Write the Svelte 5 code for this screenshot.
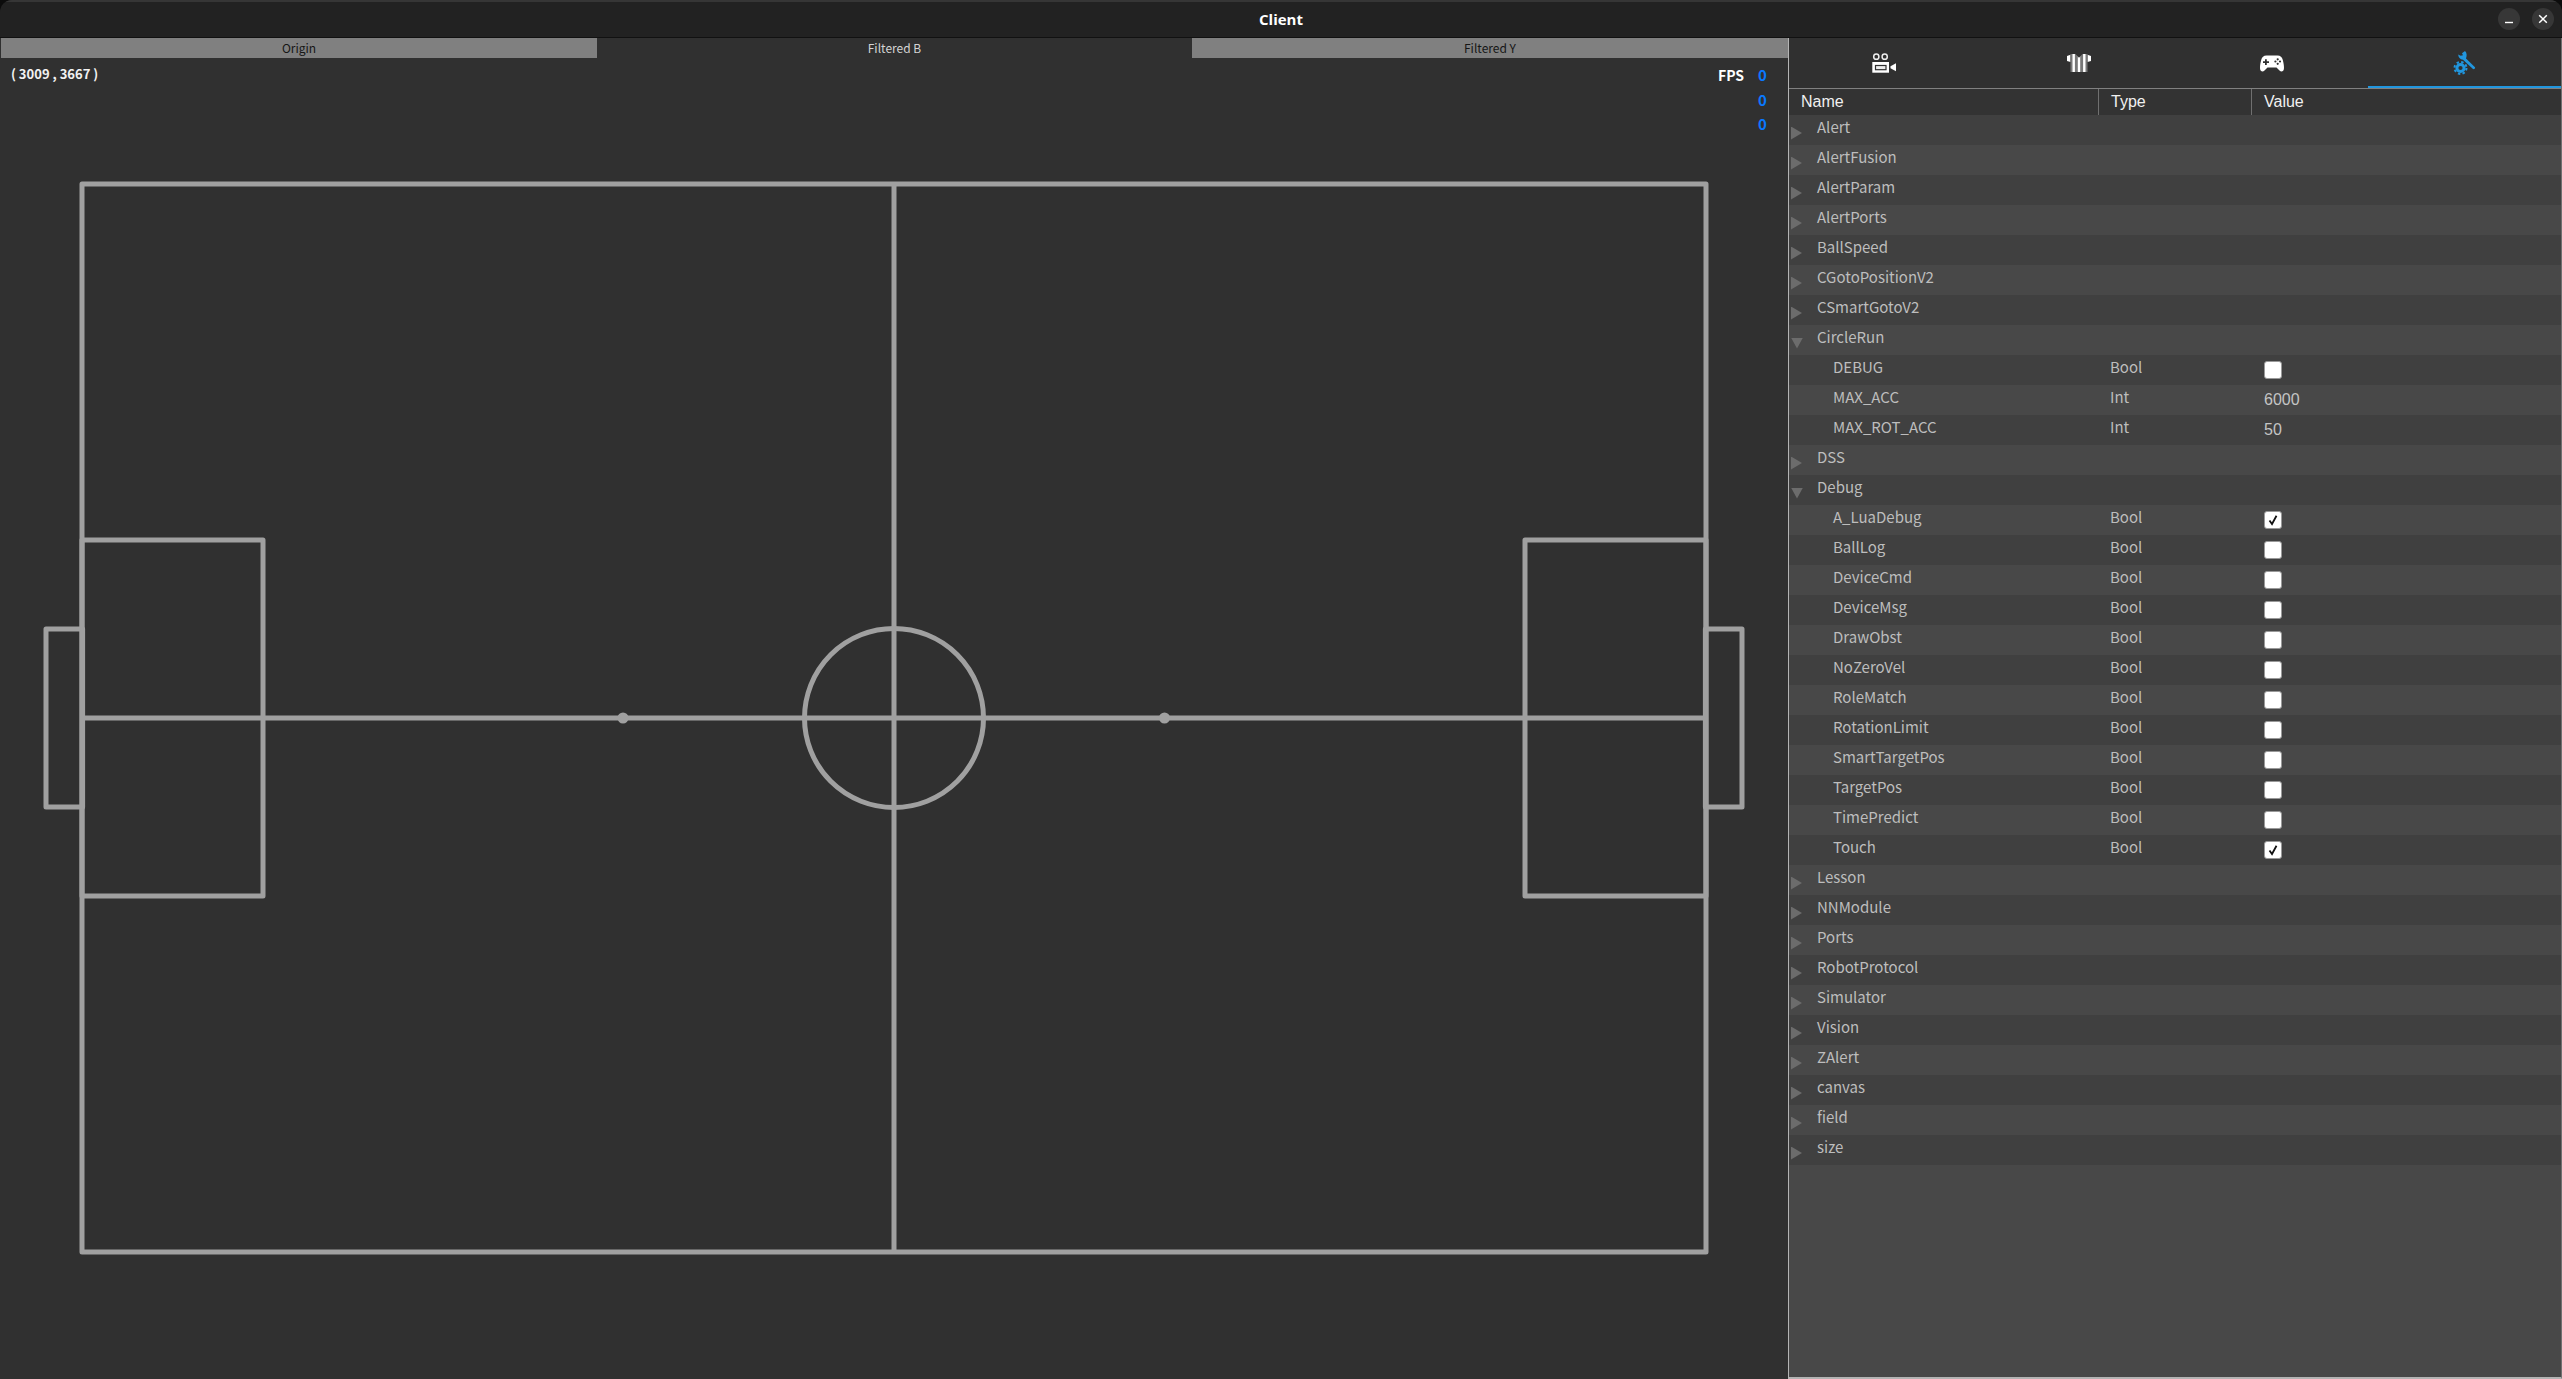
<script>
	const check = (name) => ({ name, type: 'Bool', check: false });
	const on = (name) => ({ name, type: 'Bool', check: true });
	const num = (name, value) => ({ name, type: 'Int', value });

	const groups = [
		{ name: 'Alert' },
		{ name: 'AlertFusion' },
		{ name: 'AlertParam' },
		{ name: 'AlertPorts' },
		{ name: 'BallSpeed' },
		{ name: 'CGotoPositionV2' },
		{ name: 'CSmartGotoV2' },
		{
			name: 'CircleRun',
			items: [check('DEBUG'), num('MAX_ACC', 6000), num('MAX_ROT_ACC', 50)]
		},
		{ name: 'DSS' },
		{
			name: 'Debug',
			items: [
				on('A_LuaDebug'),
				check('BallLog'),
				check('DeviceCmd'),
				check('DeviceMsg'),
				check('DrawObst'),
				check('NoZeroVel'),
				check('RoleMatch'),
				check('RotationLimit'),
				check('SmartTargetPos'),
				check('TargetPos'),
				check('TimePredict'),
				on('Touch')
			]
		},
		{ name: 'Lesson' },
		{ name: 'NNModule' },
		{ name: 'Ports' },
		{ name: 'RobotProtocol' },
		{ name: 'Simulator' },
		{ name: 'Vision' },
		{ name: 'ZAlert' },
		{ name: 'canvas' },
		{ name: 'field' },
		{ name: 'size' }
	];

	const rows = groups.flatMap((g) => [
		{ ...g, group: true, open: !!g.items },
		...(g.items ?? [])
	]);

	const views = [
		{ label: 'Origin', active: false },
		{ label: 'Filtered B', active: true },
		{ label: 'Filtered Y', active: false }
	];

	const fps = [0, 0, 0];
</script>

<div class="window">
	<header class="titlebar">
		<span class="title">Client</span>
		<div class="controls">
			<button class="ctl" aria-label="Minimize">
				<svg width="10" height="10" viewBox="0 0 10 10"><path d="M1 8.5h8" stroke="#fff" stroke-width="1.4" /></svg>
			</button>
			<button class="ctl" aria-label="Close">
				<svg width="10" height="10" viewBox="0 0 10 10"><path d="M1.2 1.2l7.6 7.6M8.8 1.2l-7.6 7.6" stroke="#fff" stroke-width="1.5" /></svg>
			</button>
		</div>
	</header>

	<main class="main">
		<section class="stage">
			<nav class="views">
				{#each views as v (v.label)}
					<span class="view" class:active={v.active}>{v.label}</span>
				{/each}
			</nav>

			<div class="canvas">
				<svg class="field" width="1787" height="1321" viewBox="1 58 1787 1321" aria-hidden="true">
					<g fill="none" stroke="#a0a0a0" stroke-width="5" stroke-linejoin="round">
						<rect x="82" y="184" width="1624" height="1068" />
						<path d="M894 184V1252M82 718H1706" />
						<circle cx="894" cy="718" r="89.500" />
						<rect x="82" y="540" width="181" height="356" />
						<rect x="1525" y="540" width="181" height="356" />
						<rect x="46" y="629" width="36.600" height="178" />
						<rect x="1705.400" y="629" width="36.600" height="178" />
					</g>
					<circle cx="623" cy="718" r="5.500" fill="#a0a0a0" />
					<circle cx="1164.500" cy="718" r="5.500" fill="#a0a0a0" />
				</svg>

				<span class="coord">( 3009 , 3667 )</span>
				<div class="fps">
					{#each fps as f, i}
						<span class="fps-label">{i === 0 ? 'FPS' : ''}</span>
						<span class="fps-val">{f}</span>
					{/each}
				</div>
			</div>
		</section>

		<aside class="panel">
			<div class="tabs">
				<span class="tab">
					<svg class="cam" width="24" height="20" viewBox="0 0 24 20" aria-hidden="true">
						<circle cx="4.300" cy="3.700" r="2.600" fill="none" stroke="#eee" stroke-width="1.500" />
						<circle cx="12.700" cy="3.700" r="2.600" fill="none" stroke="#eee" stroke-width="1.500" />
						<rect x="0.300" y="9" width="16.700" height="10.700" fill="#fff" />
						<rect x="3.500" y="12.500" width="10.500" height="4.200" fill="#eee" stroke="#303030" stroke-width="1.200" />
						<path d="M24 10.300v8l-5.500-3v-2z" fill="#fff" />
					</svg>
				</span>
				<span class="tab">
					<svg width="24" height="18" viewBox="0 0 24 18" aria-hidden="true">
						<path d="M0 2l3.500-1.200V8L0 7z M24 2l-3.500-1.200V8L24 7z" fill="#fff" />
						<rect x="3.500" y="0" width="17" height="18" fill="#777" />
						<path d="M5.500 0h2.400v18h-2.400z M10.800 0h2.400v18h-2.400z M16.100 0h2.400v18h-2.400z" fill="#fff" />
						<path d="M8.500 0h7L12 3.800z" fill="#303030" />
					</svg>
				</span>
				<span class="tab">
					<svg width="24" height="17" viewBox="0 0 24 17" aria-hidden="true">
						<path
							d="M6.500.5H17.500C20.500.5 22 2 22.800 5 23.700 8.500 24.300 12 23.800 14.500 23.400 16.600 21 17.200 19.500 15.500L16.500 12.500H7.500L4.500 15.500C3 17.200.6 16.600.2 14.500-.3 12 .3 8.500 1.200 5 2 2 3.500.5 6.500.5Z"
							fill="#fff"
						/>
						<path d="M5 4.200h1.800v2H9V8H6.800v2H5V8H3V6.200h2z" fill="#303030" />
						<g fill="#303030">
							<circle cx="17.700" cy="4.300" r="1.100" />
							<circle cx="17.700" cy="8.800" r="1.100" />
							<circle cx="15.400" cy="6.500" r="1.100" />
							<circle cx="20" cy="6.500" r="1.100" />
						</g>
					</svg>
				</span>
				<span class="tab active">
					<svg width="24" height="24" viewBox="0 0 24 24" aria-hidden="true">
						<path
							d="M12 0L9 2.200 10 4.300 7.600 4.800 5.200 3.600C5.300 6.500 7 8.600 10 8.800L20 18C21 18.600 22.500 17.400 22 16.200L13 7.500C14 4.500 14 2 12 0Z"
							fill="#2196de"
						/>
						<circle cx="7.500" cy="17" r="3.600" fill="none" stroke="#2196de" stroke-width="3" />
						<circle cx="7.500" cy="17" r="6" fill="none" stroke="#2196de" stroke-width="2" stroke-dasharray="2.400 2.310" />
					</svg>
				</span>
			</div>

			<div class="tree-head">
				<span class="th">Name</span>
				<span class="th">Type</span>
				<span class="th">Value</span>
			</div>

			<div class="tree">
				{#each rows as row, i (row.name)}
					<div class="row" class:odd={i % 2 === 1}>
						{#if row.group}
							<span class="name">
								<span class="arrow" class:open={row.open}></span>
								<span>{row.name}</span>
							</span>
						{:else}
							<span class="name child">{row.name}</span>
							<span class="type">{row.type}</span>
							{#if row.type === 'Bool'}
								<span class="box">
									{#if row.check}
										<svg width="12" height="12" viewBox="0 0 12 12" aria-hidden="true">
											<path d="M2.500 6.500L5 10 9.500 1.800" fill="none" stroke="#111" stroke-width="1.800" />
										</svg>
									{/if}
								</span>
							{:else}
								<span class="value">{row.value}</span>
							{/if}
						{/if}
					</div>
				{/each}
			</div>
		</aside>
	</main>
</div>

<style>
	:global(body) {
		margin: 0;
		background: #0c0c0c;
	}

	.window {
		width: 2562px;
		height: 1379px;
		display: flex;
		flex-direction: column;
		overflow: hidden;
		border-radius: 12px 12px 0 0;
		font-family: 'Noto Sans CJK SC', 'Noto Sans', sans-serif;
	}

	.titlebar {
		height: 38px;
		box-sizing: border-box;
		flex-shrink: 0;
		background: #222;
		border-top: 2px solid #363636;
		border-bottom: 1px solid #111;
		padding-bottom: 2px;
		display: flex;
		align-items: center;
		justify-content: center;
		position: relative;
	}
	.title {
		font-size: 15px;
		font-weight: 700;
		color: #fff;
		font-family: 'Open Sans', sans-serif;
	}
	.controls {
		position: absolute;
		right: 8px;
		top: 6px;
		display: flex;
		gap: 12px;
	}
	.ctl {
		width: 22px;
		height: 22px;
		padding: 0;
		border: 0;
		border-radius: 50%;
		background: #373737;
		display: flex;
		align-items: center;
		justify-content: center;
	}

	.main {
		flex: 1;
		display: flex;
		min-height: 0;
	}

	.stage {
		width: 1788px;
		flex-shrink: 0;
		box-sizing: border-box;
		padding-left: 1px;
		background: #303030;
		display: flex;
		flex-direction: column;
	}
	.views {
		height: 20px;
		flex-shrink: 0;
		display: grid;
		grid-template-columns: 596px 595px 596px;
	}
	.view {
		background: #808080;
		color: #161616;
		font-size: 12px;
		line-height: 20px;
		text-align: center;
	}
	.view.active {
		background: #303030;
		color: #d4d4d4;
	}

	.canvas {
		position: relative;
		flex: 1;
		min-height: 0;
	}
	.field {
		display: block;
	}
	.coord {
		position: absolute;
		left: 10px;
		top: 6px;
		font-size: 13px;
		font-weight: 700;
		line-height: 20px;
		color: #f2f2f2;
		white-space: pre;
	}
	.fps {
		position: absolute;
		left: 1717px;
		top: 5px;
		display: grid;
		grid-template-columns: 28px 9px;
		column-gap: 12px;
		grid-auto-rows: 24.500px;
		font-size: 15px;
		line-height: 24px;
	}
	.fps-label {
		font-weight: 700;
		font-size: 14px;
		color: #fff;
	}
	.fps-val {
		color: #0a78ff;
		font-weight: 700;
	}

	.panel {
		flex: 1;
		min-width: 0;
		box-sizing: border-box;
		border-left: 1px solid #b4b4b4;
		border-bottom: 2px solid #b4b4b4;
		border-right: 1px solid #707070;
		background: #484848;
		display: flex;
		flex-direction: column;
	}

	.tabs {
		height: 50px;
		flex-shrink: 0;
		background: #303030;
		display: grid;
		grid-template-columns: repeat(4, 1fr);
	}
	.tab {
		display: flex;
		align-items: center;
		justify-content: center;
		box-sizing: border-box;
	}
	.tab.active {
		border-bottom: 2px solid #2196de;
		padding-top: 2px;
	}
	.cam {
		margin-right: 3px;
	}

	.tree-head {
		height: 27px;
		flex-shrink: 0;
		box-sizing: border-box;
		background: #333;
		border-top: 1px solid #808080;
		display: grid;
		grid-template-columns: 309px 153px 1fr;
	}
	.th {
		font-family: 'Liberation Sans', sans-serif;
		font-size: 16px;
		line-height: 26px;
		color: #f0f0f0;
		padding-left: 12px;
		border-left: 1px solid #707070;
	}
	.th:first-child {
		border-left: 0;
	}

	.tree {
		flex: 1;
		min-height: 0;
	}
	.row {
		height: 30px;
		background: #404040;
		display: grid;
		grid-template-columns: 321px 154px 1fr;
		grid-template-rows: 30px;
		align-items: center;
		font-size: 15px;
		color: #bdbdbd;
	}
	.row.odd {
		background: #484848;
	}
	.name {
		display: flex;
		align-items: center;
		line-height: 22px;
		padding-bottom: 6px;
		white-space: nowrap;
	}
	.name.child {
		padding-left: 44px;
	}
	.arrow {
		width: 11px;
		height: 13px;
		margin: 8px 15px -4px 2px;
		background: #6c6c6c;
		clip-path: polygon(0 0, 100% 50%, 0 100%);
		flex-shrink: 0;
	}
	.arrow.open {
		height: 11px;
		width: 12px;
		margin-right: 14px;
		clip-path: polygon(0 0, 100% 0, 50% 100%);
	}
	.type {
		line-height: 22px;
		padding-bottom: 6px;
	}
	.value {
		font-family: 'Liberation Sans', sans-serif;
		font-size: 16px;
		color: #c4c4c4;
	}
	.box {
		width: 18px;
		height: 18px;
		box-sizing: border-box;
		background: #fff;
		border: 1px solid #999;
		border-radius: 3px;
		display: flex;
		align-items: center;
		justify-content: center;
	}
</style>
